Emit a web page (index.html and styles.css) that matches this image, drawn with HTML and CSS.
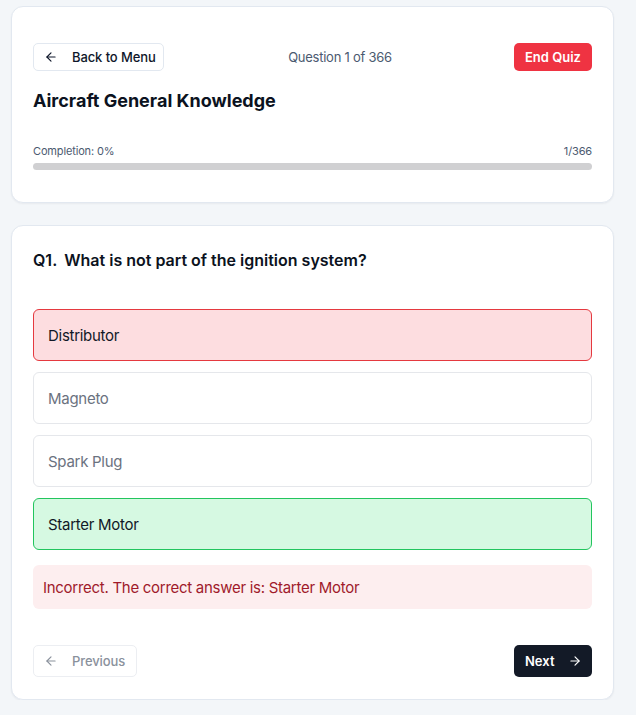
FILE: index.html
```html
<!DOCTYPE html>
<html>
<head>
<meta charset="utf-8">
<link rel="stylesheet" href="styles.css">
</head>
<body>
<div class="page">
  <section class="card header-card">
    <div class="top-row">
      <button class="btn btn-outline back">
        <svg class="icon" width="14" height="14" viewBox="0 0 24 24" fill="none" stroke="currentColor" stroke-width="2" stroke-linecap="round" stroke-linejoin="round"><path d="M19 12H5"/><path d="M12 19l-7-7 7-7"/></svg>
        <span>Back to Menu</span>
      </button>
      <div class="counter">Question 1 of 366</div>
      <button class="btn btn-danger">End Quiz</button>
    </div>
    <h1 class="title">Aircraft General Knowledge</h1>
    <div class="progress-meta">
      <span>Completion: 0%</span>
      <span>1/366</span>
    </div>
    <div class="progress-track"><div class="progress-fill" style="width:0%"></div></div>
  </section>

  <section class="card question-card">
    <h2 class="question"><span class="qnum">Q1.</span><span>What is not part of the ignition system?</span></h2>
    <div class="options">
      <div class="option wrong">Distributor</div>
      <div class="option muted">Magneto</div>
      <div class="option muted">Spark Plug</div>
      <div class="option right">Starter Motor</div>
    </div>
    <div class="feedback">Incorrect. The correct answer is: Starter Motor</div>
    <div class="nav-row">
      <button class="btn btn-outline prev" disabled>
        <svg class="icon" width="14" height="14" viewBox="0 0 24 24" fill="none" stroke="currentColor" stroke-width="2" stroke-linecap="round" stroke-linejoin="round"><path d="M19 12H5"/><path d="M12 19l-7-7 7-7"/></svg>
        <span>Previous</span>
      </button>
      <button class="btn btn-dark next">
        <span>Next</span>
        <svg class="icon" width="14" height="14" viewBox="0 0 24 24" fill="none" stroke="currentColor" stroke-width="2" stroke-linecap="round" stroke-linejoin="round"><path d="M5 12h14"/><path d="M12 5l7 7-7 7"/></svg>
      </button>
    </div>
  </section>
</div>
</body>
</html>
```
FILE: styles.css
```css
* { box-sizing: border-box; }
html, body { margin: 0; padding: 0; }
body {
  background: #f3f6f9;
  font-family: Inter, "Liberation Sans", Arial, sans-serif;
  color: #0f172a;
}
.page {
  padding: 6px 22px 0 11px;
  display: flex;
  flex-direction: column;
  gap: 22px;
}
.card {
  background: #fff;
  border: 1px solid #e2e8f0;
  border-radius: 12px;
  box-shadow: 0 1px 2px rgba(15, 23, 42, 0.05);
}
.header-card {
  padding: 36px 21px 32px;
}
.top-row {
  display: flex;
  align-items: center;
  justify-content: space-between;
  height: 28px;
}
.btn {
  font-family: inherit;
  display: inline-flex;
  align-items: center;
  border-radius: 5px;
  cursor: pointer;
  white-space: nowrap;
}
.icon { flex-shrink: 0; display: block; }
.btn-outline {
  background: #fff;
  border: 1px solid #e2e8f0;
  color: #0f172a;
  font-size: 13px;
  font-weight: 500;
  height: 28px;
  padding: 0 8px 0 10px;
  gap: 14px;
  letter-spacing: -0.1px;
}
.back { width: 131px; }
.counter {
  font-size: 13px;
  color: #4b5a70;
  margin-left: 2px;
  letter-spacing: -0.25px;
}
.btn-danger {
  background: #ef3342;
  border: none;
  color: #fff;
  font-size: 13px;
  font-weight: 600;
  height: 28px;
  padding: 0 11px;
}
.title {
  margin: 16px 0 0;
  font-size: 18px;
  line-height: 28px;
  font-weight: 700;
  color: #0b1220;
}
.progress-meta {
  margin-top: 28px;
  display: flex;
  justify-content: space-between;
  font-size: 11px;
  line-height: 16px;
  color: #4b5a70;
  letter-spacing: -0.15px;
}
.progress-track {
  margin-top: 4px;
  height: 7px;
  background: #d0d0d2;
  border-radius: 4px;
  overflow: hidden;
}
.progress-fill { height: 100%; background: #0f172a; }

.question-card {
  padding: 22px 21px 22px;
}
.question {
  margin: 0;
  font-size: 16px;
  line-height: 24px;
  font-weight: 600;
  color: #0b1220;
  display: flex;
  gap: 7px;
}
.options {
  margin-top: 37px;
  display: flex;
  flex-direction: column;
  gap: 11px;
}
.option {
  height: 52px;
  display: flex;
  align-items: center;
  padding: 0 14px;
  border: 1px solid #e5e7eb;
  border-radius: 6px;
  font-size: 15px;
  letter-spacing: -0.28px;
  color: #111827;
  background: #fff;
}
.option.muted { color: #6b7280; }
.option.wrong { background: #fddde0; border-color: #e5393f; }
.option.right { background: #d6f9e2; border-color: #22c55e; }
.feedback {
  margin-top: 15px;
  height: 44px;
  display: flex;
  align-items: center;
  padding: 0 10px;
  background: #fdeeef;
  border-radius: 6px;
  color: #a01a2b;
  font-size: 15px;
  letter-spacing: -0.28px;
}
.nav-row {
  margin-top: 36px;
  display: flex;
  justify-content: space-between;
  align-items: center;
}
.prev {
  height: 32px;
  width: 104px;
  color: #8a919c;
  border-color: #eceef2;
  gap: 14px;
  padding: 0 10px;
}
.btn-dark {
  background: #131a27;
  border: none;
  color: #fff;
  font-size: 13px;
  font-weight: 600;
  height: 32px;
  width: 78px;
  padding: 0 10px 0 11px;
  justify-content: space-between;
}
```
